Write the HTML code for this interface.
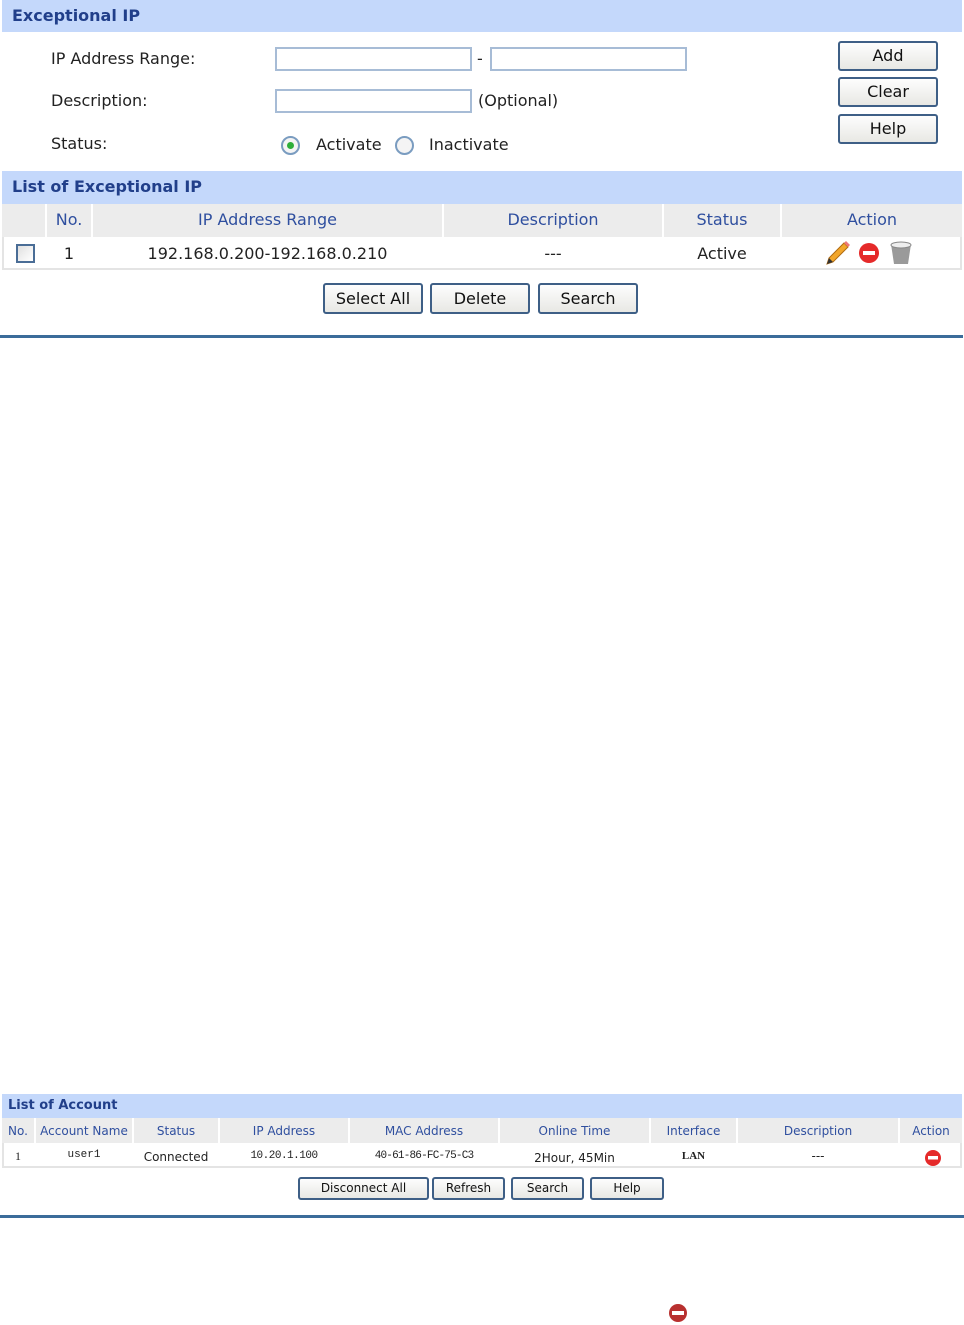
<!DOCTYPE html>
<html><head><meta charset="utf-8"><style>
*{margin:0;padding:0;box-sizing:border-box}
body{width:964px;height:1325px;background:#fff;position:relative;overflow:hidden;font-family:"DejaVu Sans","Liberation Sans",sans-serif;color:#222}
.a{position:absolute;white-space:nowrap}
.bar{position:absolute;left:2px;width:960px;background:#c4d8fb;color:#213f8a;font-weight:bold}
.inp{position:absolute;height:24px;border:2px solid #a7bcd6;background:#fff}
.btn{position:absolute;border:2px solid #3e5f86;border-radius:3px;background:linear-gradient(#fdfdfd,#e8e8e4);text-align:center;color:#111}
.th{position:absolute;background:#ececec;}
.sep{position:absolute;width:2px;background:#fff}
.hd{color:#2f4f9f}
</style></head><body>
<div class="bar" style="top:0;height:32px;font-size:16px;line-height:32px;padding-left:10px">Exceptional IP</div>
<div class="a" style="left:51px;top:49px;font-size:16px">IP Address Range:</div>
<div class="a" style="left:51px;top:91px;font-size:16px">Description:</div>
<div class="a" style="left:51px;top:134px;font-size:16px">Status:</div>
<div class="inp" style="left:275px;top:47px;width:197px"></div>
<div class="a" style="left:477px;top:49px;font-size:16px">-</div>
<div class="inp" style="left:490px;top:47px;width:197px"></div>
<div class="inp" style="left:275px;top:89px;width:197px"></div>
<div class="a" style="left:478px;top:91px;font-size:16px">(Optional)</div>
<div class="a" style="left:281px;top:136px;width:19px;height:19px;border:2px solid #7a9cc0;border-radius:50%;background:#f4f4f4"></div>
<div class="a" style="left:287px;top:142px;width:7px;height:7px;border-radius:50%;background:#2fae3a"></div>
<div class="a" style="left:316px;top:135px;font-size:16px">Activate</div>
<div class="a" style="left:395px;top:136px;width:19px;height:19px;border:2px solid #7a9cc0;border-radius:50%;background:#f4f4f4"></div>
<div class="a" style="left:429px;top:135px;font-size:16px">Inactivate</div>
<div class="btn" style="left:838px;top:41px;width:100px;height:30px;font-size:16px;line-height:26px">Add</div>
<div class="btn" style="left:838px;top:77px;width:100px;height:30px;font-size:16px;line-height:26px">Clear</div>
<div class="btn" style="left:838px;top:114px;width:100px;height:30px;font-size:16px;line-height:26px">Help</div>

<div class="bar" style="top:171px;height:33px;font-size:16px;line-height:32px;padding-left:10px">List of Exceptional IP</div>
<div class="th" style="left:2px;top:204px;width:960px;height:33px"></div>
<div class="sep" style="left:45px;top:204px;height:33px"></div>
<div class="sep" style="left:91px;top:204px;height:33px"></div>
<div class="sep" style="left:442px;top:204px;height:33px"></div>
<div class="sep" style="left:662px;top:204px;height:33px"></div>
<div class="sep" style="left:780px;top:204px;height:33px"></div>
<div class="a hd" style="left:47px;width:44px;top:210px;text-align:center;font-size:16px">No.</div>
<div class="a hd" style="left:93px;width:349px;top:210px;text-align:center;font-size:16px">IP Address Range</div>
<div class="a hd" style="left:444px;width:218px;top:210px;text-align:center;font-size:16px">Description</div>
<div class="a hd" style="left:664px;width:116px;top:210px;text-align:center;font-size:16px">Status</div>
<div class="a hd" style="left:782px;width:180px;top:210px;text-align:center;font-size:16px">Action</div>
<div class="a" style="left:2px;top:237px;width:960px;height:33px;border:2px solid #e4e4e4;border-top:none"></div>
<div class="a" style="left:16px;top:244px;width:19px;height:19px;border:2px solid #4a6d96;background:linear-gradient(135deg,#e0e0e0,#fff)"></div>
<div class="a" style="left:47px;width:44px;top:244px;text-align:center;font-size:16px">1</div>
<div class="a" style="left:93px;width:349px;top:244px;text-align:center;font-size:16px">192.168.0.200-192.168.0.210</div>
<div class="a" style="left:444px;width:218px;top:244px;text-align:center;font-size:16px">---</div>
<div class="a" style="left:664px;width:116px;top:244px;text-align:center;font-size:16px">Active</div>
<svg class="a" style="left:824px;top:240px" width="92" height="26" viewBox="0 0 92 26">
<path d="M3 24 L5 18 L20 3 L24 7 L9 22 Z" fill="#f2a62a" stroke="#b06a10" stroke-width="1"/>
<path d="M20 3 L22 1 L26 5 L24 7 Z" fill="#e77"/>
<path d="M3 24 L5 18 L9 22 Z" fill="#333"/>
<circle cx="45" cy="13" r="10" fill="#e52a2a"/><rect x="39" y="11" width="12" height="4" fill="#fff"/>
<path d="M67 4 L87 4 L84 24 L70 24 Z" fill="#9a9a9a"/><ellipse cx="77" cy="5" rx="10" ry="3" fill="#eee" stroke="#888"/>
</svg>
<div class="btn" style="left:323px;top:283px;width:100px;height:31px;font-size:16px;line-height:27px">Select All</div>
<div class="btn" style="left:430px;top:283px;width:100px;height:31px;font-size:16px;line-height:27px">Delete</div>
<div class="btn" style="left:538px;top:283px;width:100px;height:31px;font-size:16px;line-height:27px">Search</div>
<div class="a" style="left:0;top:335px;width:963px;height:3px;background:#3b6c9a"></div>

<div class="bar" style="top:1094px;height:24px;font-size:13px;line-height:24px;padding-left:6px">List of Account</div>
<div class="th" style="left:2px;top:1118px;width:960px;height:25px"></div>
<div class="sep" style="left:34px;top:1118px;height:25px"></div>
<div class="sep" style="left:132px;top:1118px;height:25px"></div>
<div class="sep" style="left:218px;top:1118px;height:25px"></div>
<div class="sep" style="left:348px;top:1118px;height:25px"></div>
<div class="sep" style="left:498px;top:1118px;height:25px"></div>
<div class="sep" style="left:649px;top:1118px;height:25px"></div>
<div class="sep" style="left:736px;top:1118px;height:25px"></div>
<div class="sep" style="left:898px;top:1118px;height:25px"></div>
<div style="font-size:12px" class="hd">
<div class="a" style="left:2px;width:32px;top:1124px;text-align:center">No.</div>
<div class="a" style="left:36px;width:96px;top:1124px;text-align:center">Account Name</div>
<div class="a" style="left:134px;width:84px;top:1124px;text-align:center">Status</div>
<div class="a" style="left:220px;width:128px;top:1124px;text-align:center">IP Address</div>
<div class="a" style="left:350px;width:148px;top:1124px;text-align:center">MAC Address</div>
<div class="a" style="left:500px;width:149px;top:1124px;text-align:center">Online Time</div>
<div class="a" style="left:651px;width:85px;top:1124px;text-align:center">Interface</div>
<div class="a" style="left:738px;width:160px;top:1124px;text-align:center">Description</div>
<div class="a" style="left:900px;width:62px;top:1124px;text-align:center">Action</div>
</div>
<div class="a" style="left:2px;top:1143px;width:960px;height:25px;border:2px solid #e4e4e4;border-top:none"></div>
<div style="font-size:12px">
<div class="a" style="left:2px;width:32px;top:1149px;text-align:center;font-family:'Liberation Serif',serif">1</div>
<div class="a" style="left:36px;width:96px;top:1149px;text-align:center;font-family:'Liberation Mono',monospace;font-size:11px">user1</div>
<div class="a" style="left:134px;width:84px;top:1150px;text-align:center">Connected</div>
<div class="a" style="left:220px;width:128px;top:1150px;text-align:center;font-family:'Liberation Mono',monospace;font-size:11px;letter-spacing:-0.5px">10.20.1.100</div>
<div class="a" style="left:350px;width:148px;top:1150px;text-align:center;font-family:'Liberation Mono',monospace;font-size:11px;letter-spacing:-0.8px">40-61-86-FC-75-C3</div>
<div class="a" style="left:500px;width:149px;top:1151px;text-align:center">2Hour, 45Min</div>
<div class="a" style="left:651px;width:85px;top:1150px;text-align:center;font-family:'Liberation Serif',serif;font-weight:bold;font-size:11px">LAN</div>
<div class="a" style="left:738px;width:160px;top:1149px;text-align:center">---</div>
</div>
<svg class="a" style="left:923px;top:1148px" width="20" height="20"><circle cx="10" cy="10" r="8" fill="#e52a2a"/><rect x="5" y="8" width="10" height="3.5" fill="#fff"/></svg>
<div class="btn" style="left:298px;top:1177px;width:131px;height:23px;font-size:12px;line-height:19px">Disconnect All</div>
<div class="btn" style="left:432px;top:1177px;width:73px;height:23px;font-size:12px;line-height:19px">Refresh</div>
<div class="btn" style="left:511px;top:1177px;width:73px;height:23px;font-size:12px;line-height:19px">Search</div>
<div class="btn" style="left:590px;top:1177px;width:74px;height:23px;font-size:12px;line-height:19px">Help</div>
<div class="a" style="left:0;top:1215px;width:964px;height:3px;background:#3b6c9a"></div>
<svg class="a" style="left:667px;top:1302px" width="22" height="22"><circle cx="11" cy="11" r="9" fill="#b8302f"/><rect x="5" y="9" width="12" height="4" fill="#fff"/></svg>
</body></html>
